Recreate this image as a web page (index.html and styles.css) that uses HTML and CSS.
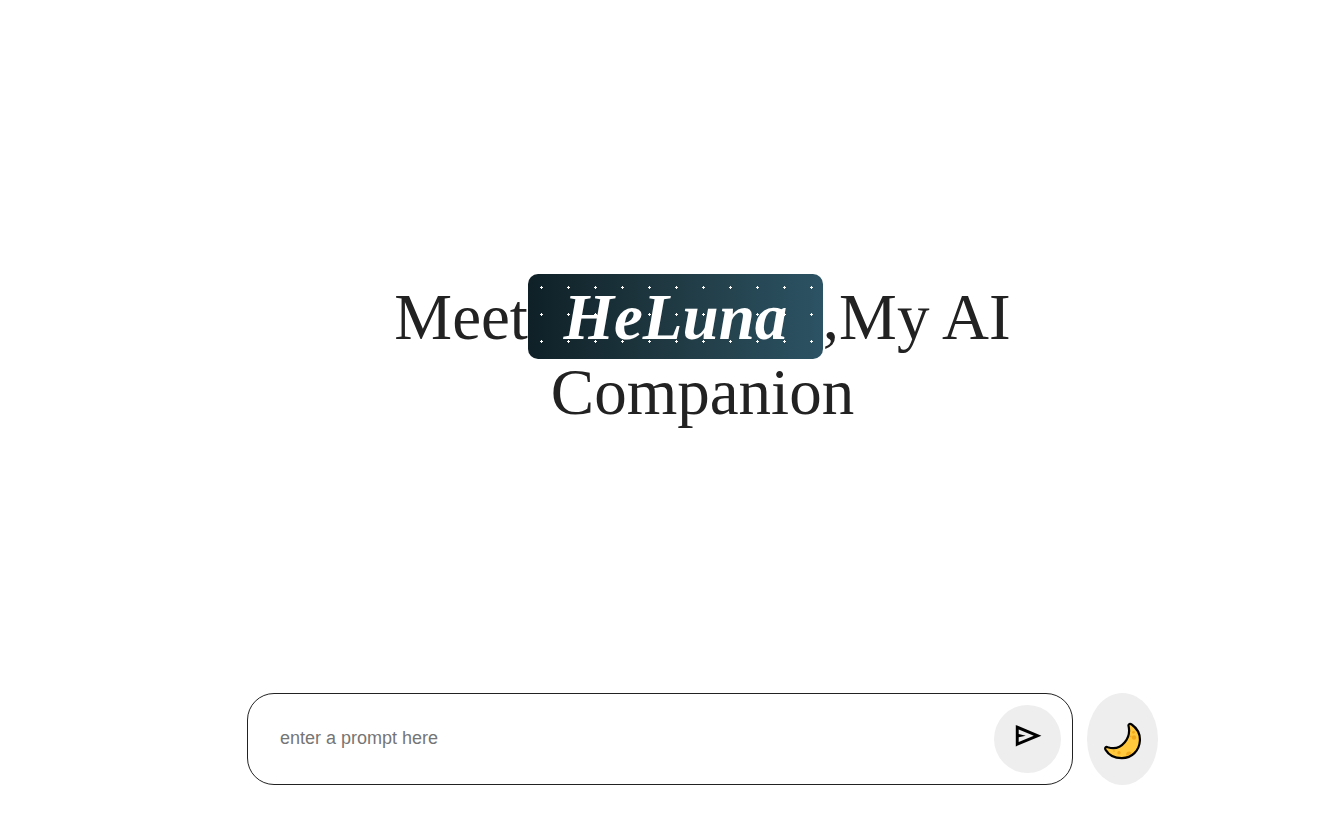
FILE: index.html
```html
<!DOCTYPE html>
<html lang="en">
<head>
<meta charset="utf-8">
<title>HeLuna</title>
<link rel="stylesheet" href="styles.css">
</head>
<body>
<main class="page">
  <h1 class="headline">Meet<span class="brand">HeLuna</span>,My AI Companion</h1>
  <form class="prompt-bar">
    <div class="prompt-box">
      <input class="prompt-input" type="text" placeholder="enter a prompt here">
      <button class="send" type="button" aria-label="Send">
        <svg width="28" height="24" viewBox="0 0 28 24"><path fill-rule="evenodd" d="M1.8 1L27.4 11.7L1.8 22.4Z M4.7 5.4V10.1L11.8 11.7L4.7 13.3V18L19.8 11.7Z"/></svg>
      </button>
    </div>
    <button class="theme" type="button" aria-label="Toggle theme">
      <svg width="38" height="38" viewBox="0 0 38 38">
        <path d="M24.5 3.8C24.2 1.8 26.1 1.3 27.7 2.5C33.3 6.5 36.2 12.3 35.9 18.5C35.4 28.8 27.8 36 18 36.1C11.2 36.2 4.8 33 1.6 27.8C.5 25.8 1.7 24.4 3.9 25.2C10.3 27.3 16.6 25.2 20.8 20.2C24.8 15.3 26 10 24.5 3.8Z" fill="#ffc83d" stroke="#000" stroke-width="2.2" stroke-linejoin="round"/>
        <g fill="#f2aa1c"><circle cx="29.5" cy="10.3" r="1.4"/><circle cx="30" cy="15.5" r="2.2"/><circle cx="26.8" cy="14.4" r=".8"/><circle cx="15" cy="30.8" r="1.7"/><circle cx="10" cy="29" r=".8"/><path d="M22.6 33.8a2.8 2.8 0 0 1 5.2-2.7A12 12 0 0 1 22.6 33.8Z"/></g>
      </svg>
    </button>
  </form>
</main>
</body>
</html>
```
FILE: styles.css
```css
* { box-sizing: border-box; }
body { margin: 0; background: #fff; }
.page {
  width: 911px;
  height: 839px;
  margin-left: 247px;
  padding: 280px 0 54px;
  display: flex;
  flex-direction: column;
  justify-content: space-between;
  align-items: center;
}
.headline {
  width: 650px;
  margin: 0;
  font: 400 65px "Liberation Serif", "Times New Roman", serif;
  line-height: 75px;
  color: #222;
  text-align: center;
}
.brand {
  padding: 7px 35.5px 6px;
  border-radius: 10px;
  color: #fff;
  font-weight: 700;
  font-style: italic;
  background:
    radial-gradient(circle, #fff 1.2px, transparent 1.4px) 0 0 / 27px 27px,
    linear-gradient(to right, #0f2027, #203a43, #2c5364);
}
.prompt-bar {
  display: flex;
  gap: 14px;
  width: 100%;
  height: 92px;
}
.prompt-box {
  flex: 1;
  display: flex;
  align-items: center;
  padding: 0 11px 0 32px;
  border: 1px solid #222;
  border-radius: 27px;
}
.prompt-input {
  flex: 1;
  padding: 0 0 2px;
  border: 0;
  outline: 0;
  background: none;
  font: 18px "Liberation Sans", Arial, sans-serif;
  color: #222;
}
.prompt-input::placeholder { color: #757575; }
.send, .theme {
  display: flex;
  align-items: center;
  justify-content: center;
  border: 0;
  border-radius: 50%;
  background: #eee;
}
.send { width: 67px; height: 68px; padding: 0 0 6px; }
.theme { width: 71px; padding: 3px 0 0; }
.send svg, .theme svg { flex: none; }
```
